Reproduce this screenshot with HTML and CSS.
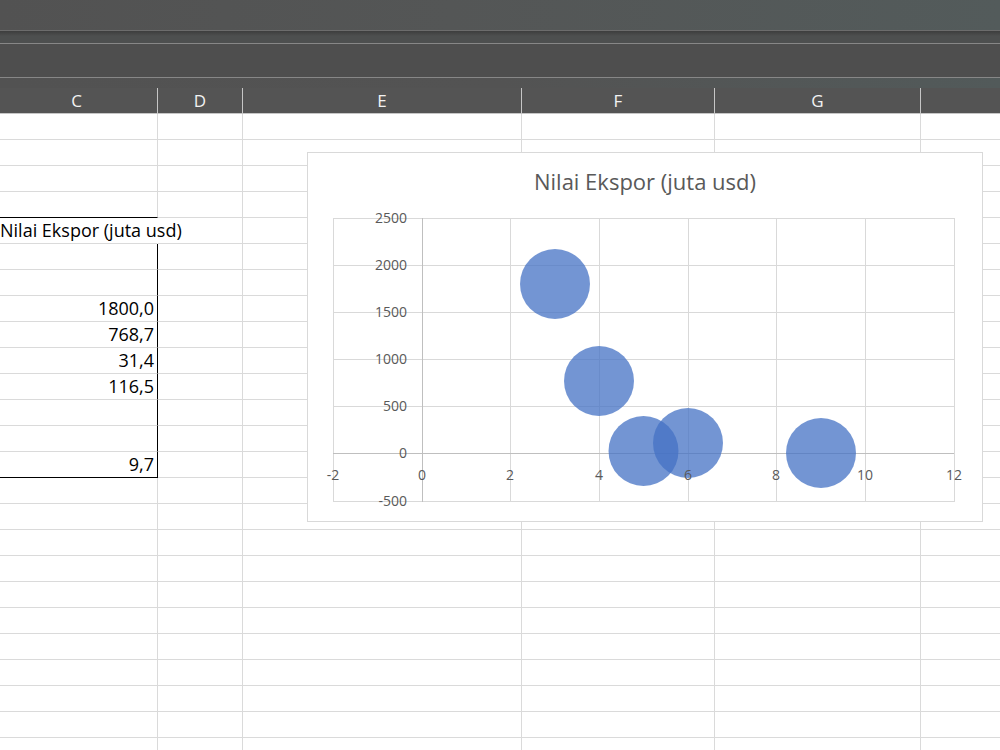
FILE: index.html
```html
<!DOCTYPE html>
<html lang="id">
<head>
    <meta charset="UTF-8">
    <title>Nilai Ekspor</title>
    <link rel="stylesheet" href="styles.css">
</head>
<body>
    <div class="app">
        <div class="titlebar"></div>
        <div class="tabs"></div>
        <div class="formula"></div>
        <div class="gap"></div>
        <div class="colheads">
            <div class="hd c">C</div>
            <div class="hd d">D</div>
            <div class="hd e">E</div>
            <div class="hd f">F</div>
            <div class="hd g">G</div>
            <div class="hd h"></div>
        </div>

        <div class="sheet">
            <div class="row"><div class="cell c"></div><div class="cell d"></div><div class="cell e"></div><div class="cell f"></div><div class="cell g"></div><div class="cell h"></div></div>
            <div class="row"><div class="cell c"></div><div class="cell d"></div><div class="cell e"></div><div class="cell f"></div><div class="cell g"></div><div class="cell h"></div></div>
            <div class="row"><div class="cell c"></div><div class="cell d"></div><div class="cell e"></div><div class="cell f"></div><div class="cell g"></div><div class="cell h"></div></div>
            <div class="row"><div class="cell c top-edge"></div><div class="cell d"></div><div class="cell e"></div><div class="cell f"></div><div class="cell g"></div><div class="cell h"></div></div>
            <!-- table header, text spills into D -->
            <div class="row"><div class="cell c spill">Nilai Ekspor (juta usd)</div><div class="cell d"></div><div class="cell e"></div><div class="cell f"></div><div class="cell g"></div><div class="cell h"></div></div>
            <div class="row"><div class="cell c boxed"></div><div class="cell d"></div><div class="cell e"></div><div class="cell f"></div><div class="cell g"></div><div class="cell h"></div></div>
            <div class="row"><div class="cell c boxed"></div><div class="cell d"></div><div class="cell e"></div><div class="cell f"></div><div class="cell g"></div><div class="cell h"></div></div>
            <div class="row"><div class="cell c boxed num">1800,0</div><div class="cell d"></div><div class="cell e"></div><div class="cell f"></div><div class="cell g"></div><div class="cell h"></div></div>
            <div class="row"><div class="cell c boxed num">768,7</div><div class="cell d"></div><div class="cell e"></div><div class="cell f"></div><div class="cell g"></div><div class="cell h"></div></div>
            <div class="row"><div class="cell c boxed num">31,4</div><div class="cell d"></div><div class="cell e"></div><div class="cell f"></div><div class="cell g"></div><div class="cell h"></div></div>
            <div class="row"><div class="cell c boxed num">116,5</div><div class="cell d"></div><div class="cell e"></div><div class="cell f"></div><div class="cell g"></div><div class="cell h"></div></div>
            <div class="row"><div class="cell c boxed"></div><div class="cell d"></div><div class="cell e"></div><div class="cell f"></div><div class="cell g"></div><div class="cell h"></div></div>
            <div class="row"><div class="cell c boxed"></div><div class="cell d"></div><div class="cell e"></div><div class="cell f"></div><div class="cell g"></div><div class="cell h"></div></div>
            <div class="row"><div class="cell c boxed bottom-edge num">9,7</div><div class="cell d"></div><div class="cell e"></div><div class="cell f"></div><div class="cell g"></div><div class="cell h"></div></div>
            <div class="row"><div class="cell c"></div><div class="cell d"></div><div class="cell e"></div><div class="cell f"></div><div class="cell g"></div><div class="cell h"></div></div>
            <div class="row"><div class="cell c"></div><div class="cell d"></div><div class="cell e"></div><div class="cell f"></div><div class="cell g"></div><div class="cell h"></div></div>
            <div class="row"><div class="cell c"></div><div class="cell d"></div><div class="cell e"></div><div class="cell f"></div><div class="cell g"></div><div class="cell h"></div></div>
            <div class="row"><div class="cell c"></div><div class="cell d"></div><div class="cell e"></div><div class="cell f"></div><div class="cell g"></div><div class="cell h"></div></div>
            <div class="row"><div class="cell c"></div><div class="cell d"></div><div class="cell e"></div><div class="cell f"></div><div class="cell g"></div><div class="cell h"></div></div>
            <div class="row"><div class="cell c"></div><div class="cell d"></div><div class="cell e"></div><div class="cell f"></div><div class="cell g"></div><div class="cell h"></div></div>
            <div class="row"><div class="cell c"></div><div class="cell d"></div><div class="cell e"></div><div class="cell f"></div><div class="cell g"></div><div class="cell h"></div></div>
            <div class="row"><div class="cell c"></div><div class="cell d"></div><div class="cell e"></div><div class="cell f"></div><div class="cell g"></div><div class="cell h"></div></div>
            <div class="row"><div class="cell c"></div><div class="cell d"></div><div class="cell e"></div><div class="cell f"></div><div class="cell g"></div><div class="cell h"></div></div>
            <div class="row"><div class="cell c"></div><div class="cell d"></div><div class="cell e"></div><div class="cell f"></div><div class="cell g"></div><div class="cell h"></div></div>
            <div class="row"><div class="cell c"></div><div class="cell d"></div><div class="cell e"></div><div class="cell f"></div><div class="cell g"></div><div class="cell h"></div></div>
        </div>

        <!-- floating chart object -->
        <div class="chart">
            <svg width="676" height="370" viewBox="0 0 676 370">
                <text class="chart-title" x="338" y="38">Nilai Ekspor (juta usd)</text>
                <g class="grid">
                    <line x1="26" y1="66.5" x2="647" y2="66.5"/>
                    <line x1="26" y1="113.5" x2="647" y2="113.5"/>
                    <line x1="26" y1="160.5" x2="647" y2="160.5"/>
                    <line x1="26" y1="207.5" x2="647" y2="207.5"/>
                    <line x1="26" y1="254.5" x2="647" y2="254.5"/>
                    <line x1="26" y1="349.5" x2="647" y2="349.5"/>
                    <line x1="26.5" y1="66" x2="26.5" y2="350"/>
                    <line x1="203.5" y1="66" x2="203.5" y2="350"/>
                    <line x1="292.5" y1="66" x2="292.5" y2="350"/>
                    <line x1="381.5" y1="66" x2="381.5" y2="350"/>
                    <line x1="469.5" y1="66" x2="469.5" y2="350"/>
                    <line x1="558.5" y1="66" x2="558.5" y2="350"/>
                    <line x1="647.5" y1="66" x2="647.5" y2="350"/>
                </g>
                <g class="axis">
                    <line x1="115.5" y1="66" x2="115.5" y2="350"/>
                    <line x1="26" y1="301.5" x2="647" y2="301.5"/>
                </g>
                <g class="bubbles">
                    <circle cx="248" cy="132" r="35"/>
                    <circle cx="292" cy="229" r="35"/>
                    <circle cx="336.5" cy="299" r="35"/>
                    <circle cx="381" cy="291" r="35"/>
                    <circle cx="514" cy="301" r="35"/>
                </g>
                <g class="ylabels">
                    <text x="100" y="71">2500</text>
                    <text x="100" y="118">2000</text>
                    <text x="100" y="165">1500</text>
                    <text x="100" y="212">1000</text>
                    <text x="100" y="259">500</text>
                    <text x="100" y="306">0</text>
                    <text x="100" y="354">-500</text>
                </g>
                <g class="xlabels">
                    <text x="26" y="328">-2</text>
                    <text x="115" y="328">0</text>
                    <text x="203" y="328">2</text>
                    <text x="292" y="328">4</text>
                    <text x="381" y="328">6</text>
                    <text x="469" y="328">8</text>
                    <text x="558" y="328">10</text>
                    <text x="647" y="328">12</text>
                </g>
            </svg>
        </div>
    </div>
</body>
</html>
```
FILE: styles.css
```css
body {
    margin: 0;
    padding: 0;
    font-family: "Open Sans", "Noto Sans", sans-serif;
    background: #ffffff;
    overflow: hidden;
}
.app {
    position: relative;
    width: 1000px;
    height: 750px;
    overflow: hidden;
}

/* dark window chrome */
.titlebar {
    height: 30px;
    background: linear-gradient(to right, #525252, #545656 45%, #535b5b);
    border-bottom: 1px solid #6c6c6c;
}
.tabs {
    height: 12px;
    background: linear-gradient(to bottom, #3d3d3d, #4d4f4f 5px), #4e5252;
    border-bottom: 1px solid #878787;
}
.formula {
    height: 33px;
    background: #4e4e4e;
    border-bottom: 1px solid #878787;
}
.gap {
    height: 10px;
    background: linear-gradient(to right, #525252, #535353 50%, #525a5a);
}
.colheads {
    display: flex;
    height: 26px;
    background: #545454;
    border-bottom: 1px solid #c6c6c6;
    box-sizing: border-box;
}
.hd {
    box-sizing: border-box;
    border-right: 1px solid #c6c6c6;
    color: #f2f2f2;
    font-size: 17px;
    line-height: 25px;
    text-align: center;
}
.hd.c {
    padding-right: 4px;
}
.hd.h {
    border-right: none;
}

/* grid */
.row {
    display: flex;
    height: 26px;
}
.cell {
    box-sizing: border-box;
    height: 26px;
    border-right: 1px solid #dadada;
    border-bottom: 1px solid #dadada;
    font-size: 18px;
    line-height: 24px;
    color: #000000;
    white-space: nowrap;
}
.c { width: 158px; flex: none; }
.d { width: 85px; flex: none; }
.e { width: 279px; flex: none; }
.f { width: 193px; flex: none; }
.g { width: 206px; flex: none; }
.h { flex: 1; border-right: none; }

.cell.top-edge {
    border-bottom-color: #000000;
}
.cell.spill {
    border-right-color: transparent;
    overflow: visible;
    padding-left: 0;
}
.cell.boxed {
    border-right-color: #000000;
}
.cell.bottom-edge {
    border-bottom-color: #000000;
}
.cell.num {
    text-align: right;
    padding-right: 3px;
}

/* chart object over the cells */
.chart {
    position: absolute;
    left: 307px;
    top: 152px;
    width: 676px;
    height: 370px;
    box-sizing: border-box;
    background: #ffffff;
    border: 1px solid #d9d9d9;
}
.chart svg {
    display: block;
    margin: -1px 0 0 -1px;
}
.chart-title {
    font-family: "Open Sans", sans-serif;
    font-size: 22px;
    fill: #595959;
    text-anchor: middle;
}
.grid line {
    stroke: #d9d9d9;
    stroke-width: 1;
}
.axis line {
    stroke: #bfbfbf;
    stroke-width: 1;
}
.bubbles circle {
    fill: #4472c4;
    fill-opacity: 0.75;
}
.ylabels text,
.xlabels text {
    font-family: "Open Sans", sans-serif;
    font-size: 14px;
    fill: #595959;
}
.ylabels text {
    text-anchor: end;
}
.xlabels text {
    text-anchor: middle;
}
```
